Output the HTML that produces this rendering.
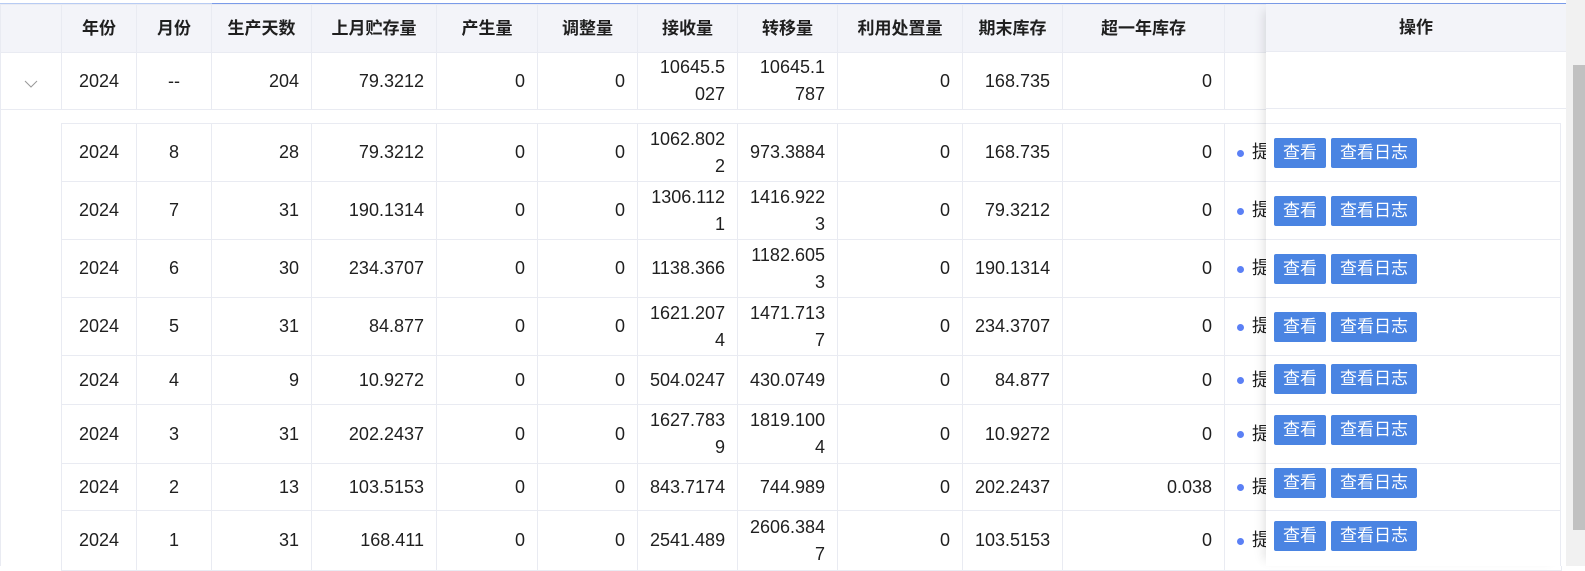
<!DOCTYPE html>
<html><head><meta charset="utf-8"><style>
*{box-sizing:border-box;margin:0;padding:0}
body{width:1585px;height:566px;overflow:hidden;background:#fff;font-family:"Liberation Sans","Noto Sans CJK SC",sans-serif;font-size:18px;color:#1f1f1f;position:relative}
table{border-collapse:collapse;table-layout:fixed;position:absolute}
td,th{border:1px solid #e9ebf2;padding:0 12px;white-space:nowrap;line-height:27px}
th{background:#f3f4f9;font-weight:bold;text-align:center;font-size:17px;height:48px}
td.c{text-align:center}td.r{text-align:right}
#topline{position:absolute;left:0;top:3px;width:1566px;height:1px;background:#b7cbf3}
#topline2{position:absolute;left:212px;top:3px;width:1354px;height:1px;background:#7a9be9}
#fix{position:absolute;left:1266px;top:4px;width:300px;height:562px;background:#fff;box-shadow:-8px 0 10px -6px rgba(0,0,0,.12)}
#fixh{height:48px;background:#f3f4f9;border-bottom:1px solid #e9ebf2;text-align:center;font-weight:bold;font-size:17px;line-height:48px}
.btns{position:absolute;left:8px;height:30px}
.b{display:inline-block;height:30px;line-height:30px;background:#4a84e2;color:#fff;border-radius:2px;font-size:17px;padding:0 9px;margin-right:5px;vertical-align:top}
.dot{display:inline-block;width:7px;height:7px;border-radius:50%;background:#5b80f5;margin-right:8px;vertical-align:middle}
#sb{position:absolute;left:1566px;top:0;width:19px;height:566px;background:#f1f1f1}
#thumb{position:absolute;left:1573px;top:65px;width:12px;height:465px;background:#c1c1c1}
</style></head><body>
<table style="left:0;top:4px;width:1566px">
<colgroup><col style="width:61px"><col style="width:75px"><col style="width:75px"><col style="width:100px"><col style="width:125px"><col style="width:101px"><col style="width:100px"><col style="width:100px"><col style="width:100px"><col style="width:125px"><col style="width:100px"><col style="width:162px"><col style="width:342px"></colgroup>
<tr><th></th><th>年份</th><th>月份</th><th>生产天数</th><th>上月贮存量</th><th>产生量</th><th>调整量</th><th>接收量</th><th>转移量</th><th>利用处置量</th><th>期末库存</th><th>超一年库存</th><th></th></tr>
<tr style="height:57px"><td class="c"><svg width="14" height="10" viewBox="0 0 14 10" style="vertical-align:middle;margin-top:4px"><polyline points="1,2 7,8 13,2" fill="none" stroke="#999" stroke-width="1"/></svg></td><td class="c">2024</td><td class="c">--</td><td class="r">204</td><td class="r">79.3212</td><td class="r">0</td><td class="r">0</td><td class="r">10645.5<br>027</td><td class="r">10645.1<br>787</td><td class="r">0</td><td class="r">168.735</td><td class="r">0</td><td></td></tr>
</table>
<div style="position:absolute;left:0;top:109px;width:1px;height:457px;background:#e9ebf2"></div>
<table style="left:61px;top:123px;width:1500px">
<colgroup><col style="width:75px"><col style="width:75px"><col style="width:100px"><col style="width:125px"><col style="width:101px"><col style="width:100px"><col style="width:100px"><col style="width:100px"><col style="width:125px"><col style="width:100px"><col style="width:162px"><col style="width:337px"></colgroup>
<tr style="height:58px"><td class="c">2024</td><td class="c">8</td><td class="r">28</td><td class="r">79.3212</td><td class="r">0</td><td class="r">0</td><td class="r">1062.802<br>2</td><td class="r">973.3884</td><td class="r">0</td><td class="r">168.735</td><td class="r">0</td><td><span class="dot"></span>提</td></tr>
<tr style="height:58px"><td class="c">2024</td><td class="c">7</td><td class="r">31</td><td class="r">190.1314</td><td class="r">0</td><td class="r">0</td><td class="r">1306.112<br>1</td><td class="r">1416.922<br>3</td><td class="r">0</td><td class="r">79.3212</td><td class="r">0</td><td><span class="dot"></span>提</td></tr>
<tr style="height:58px"><td class="c">2024</td><td class="c">6</td><td class="r">30</td><td class="r">234.3707</td><td class="r">0</td><td class="r">0</td><td class="r">1138.366</td><td class="r">1182.605<br>3</td><td class="r">0</td><td class="r">190.1314</td><td class="r">0</td><td><span class="dot"></span>提</td></tr>
<tr style="height:58px"><td class="c">2024</td><td class="c">5</td><td class="r">31</td><td class="r">84.877</td><td class="r">0</td><td class="r">0</td><td class="r">1621.207<br>4</td><td class="r">1471.713<br>7</td><td class="r">0</td><td class="r">234.3707</td><td class="r">0</td><td><span class="dot"></span>提</td></tr>
<tr style="height:49px"><td class="c">2024</td><td class="c">4</td><td class="r">9</td><td class="r">10.9272</td><td class="r">0</td><td class="r">0</td><td class="r">504.0247</td><td class="r">430.0749</td><td class="r">0</td><td class="r">84.877</td><td class="r">0</td><td><span class="dot"></span>提</td></tr>
<tr style="height:59px"><td class="c">2024</td><td class="c">3</td><td class="r">31</td><td class="r">202.2437</td><td class="r">0</td><td class="r">0</td><td class="r">1627.783<br>9</td><td class="r">1819.100<br>4</td><td class="r">0</td><td class="r">10.9272</td><td class="r">0</td><td><span class="dot"></span>提</td></tr>
<tr style="height:47px"><td class="c">2024</td><td class="c">2</td><td class="r">13</td><td class="r">103.5153</td><td class="r">0</td><td class="r">0</td><td class="r">843.7174</td><td class="r">744.989</td><td class="r">0</td><td class="r">202.2437</td><td class="r">0.038</td><td><span class="dot"></span>提</td></tr>
<tr style="height:60px"><td class="c">2024</td><td class="c">1</td><td class="r">31</td><td class="r">168.411</td><td class="r">0</td><td class="r">0</td><td class="r">2541.489</td><td class="r">2606.384<br>7</td><td class="r">0</td><td class="r">103.5153</td><td class="r">0</td><td><span class="dot"></span>提</td></tr>
</table>
<div id="topline"></div><div id="topline2"></div>
<div id="fix">
<div id="fixh">操作</div>
<div style="position:absolute;left:0;top:104px;width:100%;height:1px;background:#e9ebf2"></div>
<div style="position:absolute;left:294px;top:119px;width:1px;height:443px;background:#e9ebf2"></div>
<div style="position:absolute;left:0;top:119px;width:294px;height:1px;background:#e9ebf2"></div>
<div style="position:absolute;left:0;top:177px;width:294px;height:1px;background:#e9ebf2"></div>
<div style="position:absolute;left:0;top:235px;width:294px;height:1px;background:#e9ebf2"></div>
<div style="position:absolute;left:0;top:293px;width:294px;height:1px;background:#e9ebf2"></div>
<div style="position:absolute;left:0;top:351px;width:294px;height:1px;background:#e9ebf2"></div>
<div style="position:absolute;left:0;top:400px;width:294px;height:1px;background:#e9ebf2"></div>
<div style="position:absolute;left:0;top:459px;width:294px;height:1px;background:#e9ebf2"></div>
<div style="position:absolute;left:0;top:506px;width:294px;height:1px;background:#e9ebf2"></div>
<div class="btns" style="top:134px"><span class="b">查看</span><span class="b">查看日志</span></div>
<div class="btns" style="top:192px"><span class="b">查看</span><span class="b">查看日志</span></div>
<div class="btns" style="top:250px"><span class="b">查看</span><span class="b">查看日志</span></div>
<div class="btns" style="top:308px"><span class="b">查看</span><span class="b">查看日志</span></div>
<div class="btns" style="top:360px"><span class="b">查看</span><span class="b">查看日志</span></div>
<div class="btns" style="top:411px"><span class="b">查看</span><span class="b">查看日志</span></div>
<div class="btns" style="top:464px"><span class="b">查看</span><span class="b">查看日志</span></div>
<div class="btns" style="top:517px"><span class="b">查看</span><span class="b">查看日志</span></div>
</div>
<div id="sb"></div><div id="thumb"></div>
</body></html>
